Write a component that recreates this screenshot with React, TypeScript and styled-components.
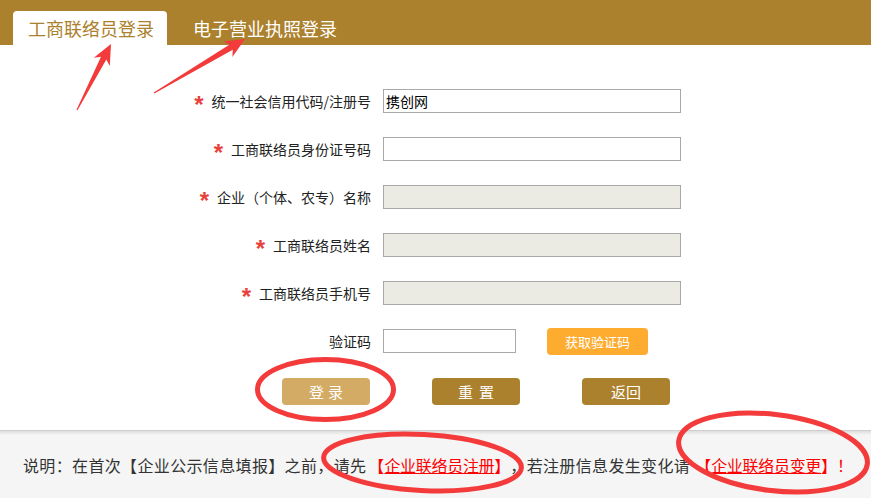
import React from "react";
import styled, { createGlobalStyle } from "styled-components";

const GlobalStyle = createGlobalStyle`
  html, body { margin: 0; padding: 0; background: #fff; }
  body { font-family: "Microsoft YaHei", "Noto Sans CJK SC", sans-serif; }
  * { box-sizing: border-box; }
`;

const GOLD = "#ab812d";
const FONT = `"Microsoft YaHei", "Noto Sans CJK SC", sans-serif`;

const Page = styled.div`
  position: relative;
  width: 871px;
  height: 498px;
  overflow: hidden;
  font-family: ${FONT};
  color: #333;
`;

const Header = styled.div`
  height: 45px;
  background: ${GOLD};
  display: flex;
  align-items: flex-end;
  padding-left: 13px;
  gap: 11px;
`;

const Tab = styled.div<{ $active?: boolean }>`
  height: 34px;
  display: flex;
  align-items: center;
  padding: 0 13px 0 15px;
  font-size: 18px;
  border-radius: 4px 4px 0 0;
  background: ${(p) => (p.$active ? "#fff" : "transparent")};
  color: ${(p) => (p.$active ? GOLD : "#fff")};
`;

const Main = styled.div`
  height: 385px;
  padding-top: 32px;
`;

const Row = styled.div`
  display: grid;
  grid-template-columns: 371px auto;
  column-gap: 12px;
  height: 48px;
  align-items: center;
`;

const Label = styled.div`
  display: flex;
  justify-content: flex-end;
  align-items: center;
  gap: 8px;
  font-size: 14px;
  color: #222;
`;

const Star = styled.span`
  color: #e8413c;
  font-family: "Liberation Sans", Arial, sans-serif;
  font-weight: bold;
  font-size: 24px;
  line-height: 24px;
  height: 24px;
  transform: translateY(4px);
`;

const Field = styled.div`
  display: flex;
  align-items: center;
`;

const Input = styled.input<{ $width?: number }>`
  width: ${(p) => p.$width ?? 298}px;
  height: 24px;
  border: 1px solid #a9a9a9;
  padding: 0 2px;
  font-family: ${FONT};
  font-size: 14px;
  color: #000;
  background: #fff;
  outline: none;
  &:disabled {
    background: #ebebe4;
  }
`;

const CodeButton = styled.button`
  margin-left: 31px;
  width: 101px;
  height: 27px;
  border: none;
  border-radius: 4px;
  background: #fdac30;
  color: #fff;
  font-family: ${FONT};
  font-size: 13px;
  padding: 0;
`;

const Actions = styled.div`
  display: flex;
  gap: 62px;
  padding-left: 282px;
  margin-top: 13px;
`;

const ActionButton = styled.button<{ $light?: boolean; $spacing?: number }>`
  width: 88px;
  height: 27px;
  border: none;
  border-radius: 4px;
  background: ${(p) => (p.$light ? "#d4ab64" : GOLD)};
  color: #fff;
  font-family: ${FONT};
  font-size: 15px;
  padding: 0 0 0 ${(p) => p.$spacing ?? 0}px;
  letter-spacing: ${(p) => p.$spacing ?? 0}px;
`;

const Footer = styled.div`
  height: 68px;
  border-top: 1px solid #cfcfcf;
  background: linear-gradient(#dedede, #f5f5f5 4px);
  display: flex;
  align-items: center;
  padding-left: 23px;
  font-size: 16px;
  letter-spacing: 0.35px;
  color: #333;
  white-space: pre;
`;

const Red = styled.span<{ $before?: number }>`
  color: #f00;
  margin-left: ${(p) => p.$before ?? 0}px;
  letter-spacing: 0;
`;

const Link = styled.a`
  color: #f00;
  text-decoration: underline;
  letter-spacing: -0.3px;
`;

const Overlay = styled.svg`
  position: absolute;
  left: 0;
  top: 0;
  pointer-events: none;
`;

type F = { label: string; required: boolean; value?: string; disabled?: boolean };

const fields: F[] = [
  { label: "统一社会信用代码/注册号", required: true, value: "携创网" },
  { label: "工商联络员身份证号码", required: true },
  { label: "企业（个体、农专）名称", required: true, disabled: true },
  { label: "工商联络员姓名", required: true, disabled: true },
  { label: "工商联络员手机号", required: true, disabled: true },
];

function arrow(tail: [number, number], tip: [number, number], headLen: number, headHalf: number, shaftHalf: number, tailHalf: number) {
  const dx = tip[0] - tail[0];
  const dy = tip[1] - tail[1];
  const len = Math.hypot(dx, dy);
  const ux = dx / len, uy = dy / len;
  const px = -uy, py = ux;
  const bx = tip[0] - ux * headLen, by = tip[1] - uy * headLen;
  const nx = tip[0] - ux * (headLen - 4), ny = tip[1] - uy * (headLen - 4);
  const pts = [
    [tail[0] + px * tailHalf, tail[1] + py * tailHalf],
    [nx + px * shaftHalf, ny + py * shaftHalf],
    [bx + px * headHalf, by + py * headHalf],
    tip,
    [bx - px * headHalf, by - py * headHalf],
    [nx - px * shaftHalf, ny - py * shaftHalf],
    [tail[0] - px * tailHalf, tail[1] - py * tailHalf],
  ];
  return pts.map((p) => `${p[0].toFixed(1)},${p[1].toFixed(1)}`).join(" ");
}

export default function App() {
  return (
    <Page>
      <GlobalStyle />
      <Header>
        <Tab $active>工商联络员登录</Tab>
        <Tab>电子营业执照登录</Tab>
      </Header>
      <Main>
        {fields.map((f) => (
          <Row key={f.label}>
            <Label>
              {f.required && <Star>*</Star>}
              <span>{f.label}</span>
            </Label>
            <Field>
              <Input defaultValue={f.value} disabled={f.disabled} />
            </Field>
          </Row>
        ))}
        <Row>
          <Label>
            <span>验证码</span>
          </Label>
          <Field>
            <Input $width={133} />
            <CodeButton>获取验证码</CodeButton>
          </Field>
        </Row>
        <Actions>
          <ActionButton $light $spacing={4}>登录</ActionButton>
          <ActionButton $spacing={6}>重置</ActionButton>
          <ActionButton>返回</ActionButton>
        </Actions>
      </Main>
      <Footer>
        {"说明：在首次【企业公示信息填报】之前，请先"}
        <Red $before={2}>【</Red>
        <Link>企业联络员注册</Link>
        <Red>】</Red>
        {"，若注册信息发生变化请"}
        <Red $before={5}>【</Red>
        <Link>企业联络员变更</Link>
        <Red>】！</Red>
      </Footer>
      <Overlay width="871" height="498" viewBox="0 0 871 498">
        <polygon points={arrow([77, 110], [111, 44], 20, 9, 3, 0.6)} fill="#f33b3b" />
        <polygon points={arrow([154, 93], [245, 39], 20, 9, 3, 0.6)} fill="#f33b3b" />
        <g fill="none" stroke="#f33b3b" strokeWidth="5">
          <ellipse cx="325.5" cy="389.5" rx="68" ry="30" />
          <ellipse cx="422.5" cy="462.5" rx="99" ry="28" transform="rotate(3 422.5 462.5)" />
          <ellipse cx="773" cy="452.5" rx="95" ry="38" transform="rotate(7 773 452.5)" />
        </g>
      </Overlay>
    </Page>
  );
}
